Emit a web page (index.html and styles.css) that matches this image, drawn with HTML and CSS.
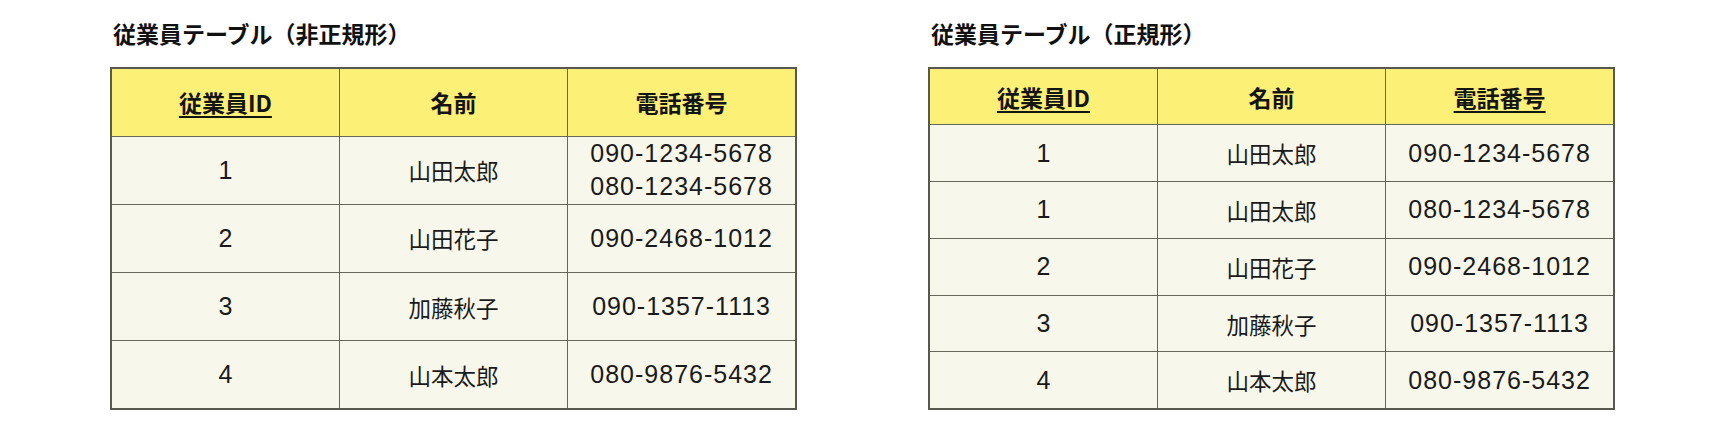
FILE: index.html
```html
<!DOCTYPE html>
<html lang="ja">
<head>
<meta charset="utf-8">
<title>従業員テーブル</title>
<link rel="stylesheet" href="styles.css">
</head>
<body>
<main class="page">
  <section class="panel">
    <h2 class="panel-title">従業員テーブル（非正規形）</h2>
    <table class="emp-table emp-table--tall">
      <colgroup><col><col><col></colgroup>
      <thead>
        <tr><th><span class="key">従業員ID</span></th><th>名前</th><th>電話番号</th></tr>
      </thead>
      <tbody>
        <tr><td class="num">1</td><td>山田太郎</td><td class="num phone multi">090-1234-5678<br>080-1234-5678</td></tr>
        <tr><td class="num">2</td><td>山田花子</td><td class="num phone">090-2468-1012</td></tr>
        <tr><td class="num">3</td><td>加藤秋子</td><td class="num phone">090-1357-1113</td></tr>
        <tr><td class="num">4</td><td>山本太郎</td><td class="num phone">080-9876-5432</td></tr>
      </tbody>
    </table>
  </section>
  <section class="panel">
    <h2 class="panel-title">従業員テーブル（正規形）</h2>
    <table class="emp-table emp-table--compact">
      <colgroup><col><col><col></colgroup>
      <thead>
        <tr><th><span class="key">従業員ID</span></th><th>名前</th><th><span class="key">電話番号</span></th></tr>
      </thead>
      <tbody>
        <tr><td class="num">1</td><td>山田太郎</td><td class="num phone">090-1234-5678</td></tr>
        <tr><td class="num">1</td><td>山田太郎</td><td class="num phone">080-1234-5678</td></tr>
        <tr><td class="num">2</td><td>山田花子</td><td class="num phone">090-2468-1012</td></tr>
        <tr><td class="num">3</td><td>加藤秋子</td><td class="num phone">090-1357-1113</td></tr>
        <tr><td class="num">4</td><td>山本太郎</td><td class="num phone">080-9876-5432</td></tr>
      </tbody>
    </table>
  </section>
</main>
</body>
</html>
```
FILE: styles.css
```css
* { box-sizing: border-box; }

html, body {
  margin: 0;
  padding: 0;
  background: #ffffff;
}

body {
  font-family: "Liberation Sans", "Noto Sans CJK JP", sans-serif;
  color: #151515;
}

.page {
  display: flex;
  gap: 131px;
  padding: 17px 0 0 110px;
}

.panel {
  width: 687px;
  flex: none;
}

.panel-title {
  margin: 0 0 18px 0;
  padding-left: 3px;
  font-family: "Noto Sans CJK JP", sans-serif;
  font-weight: 700;
  font-size: 23px;
  line-height: 32px;
  color: #111111;
}

.emp-table {
  width: 687px;
  table-layout: fixed;
  border-collapse: collapse;
  border: 2px solid #585850;
}

.emp-table col { width: 33.333%; }

.emp-table th,
.emp-table td {
  border: 1px solid #66665c;
  text-align: center;
  vertical-align: middle;
  padding: 0;
}

.emp-table th {
  background: #fcf077;
  font-family: "Noto Sans CJK JP", sans-serif;
  font-weight: 700;
  font-size: 23px;
  color: #141414;
}

.emp-table td {
  background: #f8f7eb;
  font-family: "Noto Sans CJK JP", sans-serif;
  font-size: 22.5px;
  color: #1a1a1a;
}

.emp-table td.num {
  font-family: "Liberation Sans", "Noto Sans CJK JP", sans-serif;
  font-size: 25px;
}

.emp-table td.phone {
  letter-spacing: 1px;
}

.emp-table td.multi {
  line-height: 33px;
}

.emp-table--tall tr { height: 68.2px; }
.emp-table--compact tr { height: 56.8px; }

.key {
  text-decoration: underline;
  text-decoration-thickness: 2px;
  text-underline-offset: 4px;
}
```
